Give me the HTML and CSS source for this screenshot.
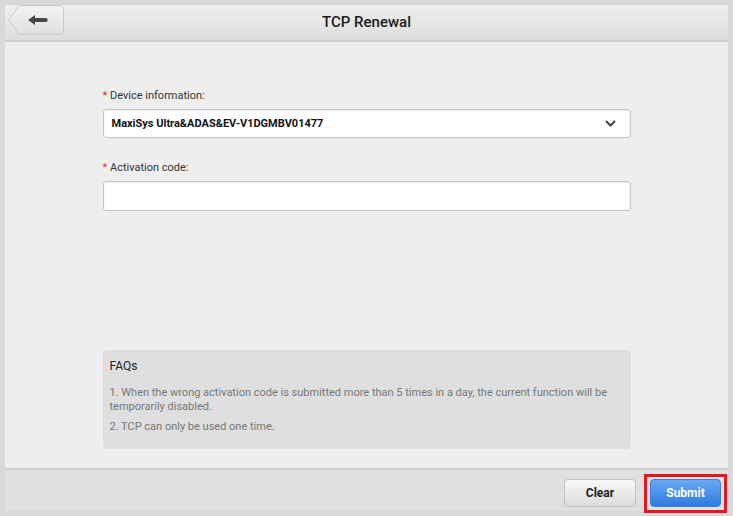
FILE: index.html
```html
<!DOCTYPE html>
<html>
<head>
    <title>TCP Renewal</title>
    <link rel="stylesheet" href="styles.css">
</head>
<body>
    <div class="app">
        <div class="header">
            <button class="back-btn">
                <svg class="back-shape" width="56" height="30" viewBox="0 0 56 30">
                    <defs>
                        <linearGradient id="backGrad" x1="0" y1="0" x2="0" y2="1">
                            <stop offset="0" stop-color="#f3f3f3"/>
                            <stop offset="1" stop-color="#e0e0e0"/>
                        </linearGradient>
                    </defs>
                    <path d="M11 0.5 H51 Q55.5 0.5 55.5 5 V24.5 Q55.5 29 51 29 H11 L0.8 14.8 Z" fill="url(#backGrad)" stroke="#c9c9c9"/>
                    <path d="M20 15 L27 10 L27 13 L38 13 Q39.5 13 39.5 14.5 L39.5 15.5 Q39.5 17 38 17 L27 17 L27 20 Z" fill="#474747"/>
                </svg>
            </button>
            <h1 class="title">TCP Renewal</h1>
        </div>

        <div class="content">
            <div class="form">
                <label class="field-label"><span class="req">*</span> Device information:</label>
                <div class="select-box">
                    <span class="select-value">MaxiSys Ultra&amp;ADAS&amp;EV-V1DGMBV01477</span>
                    <svg class="chevron" width="11" height="7" viewBox="0 0 11 7">
                        <path d="M1 1 L5.5 5.5 L10 1" fill="none" stroke="#444" stroke-width="2"/>
                    </svg>
                </div>

                <label class="field-label second"><span class="req">*</span> Activation code:</label>
                <input class="text-input" type="text">

                <div class="faq">
                    <div class="faq-title">FAQs</div>
                    <p>1. When the wrong activation code is submitted more than 5 times in a day, the current function will be temporarily disabled.</p>
                    <p>2. TCP can only be used one time.</p>
                </div>
            </div>
        </div>

        <div class="footer">
            <button class="btn btn-clear">Clear</button>
            <div class="highlight">
                <button class="btn btn-submit">Submit</button>
            </div>
        </div>
    </div>
</body>
</html>
```

FILE: styles.css
```css
body {
    margin: 0;
    padding: 5px;
    background-color: #d9d9d9;
    font-family: Roboto, 'Liberation Sans', sans-serif;
    color: #222;
}
.app {
    height: 506px;
    display: flex;
    flex-direction: column;
    background-color: #eeeeee;
}
.header {
    position: relative;
    height: 35px;
    display: flex;
    align-items: center;
    justify-content: center;
    background: linear-gradient(#efefef, #dedede);
    border-bottom: 2px solid #cfcfcf;
}
.back-btn {
    position: absolute;
    left: 3px;
    top: 0;
    width: 56px;
    height: 30px;
    padding: 0;
    border: none;
    background: none;
    cursor: pointer;
}
.back-shape {
    display: block;
}
.title {
    margin: 0 0 2px;
    font-size: 15px;
    font-weight: 500;
    color: #1a1a1a;
}
.content {
    flex: 1;
    padding-top: 47px;
}
.form {
    width: 528px;
    margin: 0 auto;
}
.field-label {
    display: block;
    font-size: 11px;
    line-height: 13px;
    color: #333;
    margin-bottom: 7px;
}
.field-label.second {
    margin-top: 23px;
}
.req {
    color: #e03030;
}
.select-box {
    height: 29px;
    box-sizing: border-box;
    border: 1px solid #c4c4c4;
    border-radius: 3px;
    background-color: #fff;
    box-shadow: inset 0 1px 2px rgba(0, 0, 0, 0.08);
    display: flex;
    align-items: center;
    justify-content: space-between;
    padding: 0 14px 0 8px;
}
.select-value {
    font-size: 11px;
    font-weight: bold;
    color: #111;
}
.text-input {
    display: block;
    width: 100%;
    height: 30px;
    box-sizing: border-box;
    border: 1px solid #c4c4c4;
    border-radius: 3px;
    background-color: #fff;
    box-shadow: inset 0 1px 2px rgba(0, 0, 0, 0.08);
}
.faq {
    margin-top: 139px;
    background-color: #dfdfdf;
    border-radius: 4px;
    padding: 9px 7px 9px;
}
.faq-title {
    font-size: 12px;
    color: #222;
    margin-bottom: 13px;
}
.faq p {
    margin: 0 0 6px;
    font-size: 11px;
    line-height: 14px;
    color: #777;
}
.footer {
    height: 43px;
    box-sizing: border-box;
    border-top: 2px solid #cfcfcf;
    background-color: #e0e0e0;
    display: flex;
    align-items: flex-start;
    justify-content: flex-end;
    padding: 4px 1px 0 0;
    gap: 8px;
}
.highlight {
    border: 3px solid #e8141e;
    padding: 2px 3px 3px;
    display: flex;
}
.btn {
    width: 72px;
    height: 28px;
    border-radius: 4px;
    font-family: Roboto, 'Liberation Sans', sans-serif;
    font-size: 12px;
    font-weight: bold;
    cursor: pointer;
}
.btn-clear {
    margin-top: 5px;
    border: 1px solid #c2c2c2;
    background: linear-gradient(#f8f8f8, #dcdcdc);
    color: #222;
}
.btn-submit {
    width: 71px;
    border: 1px solid #3a7fd8;
    background: linear-gradient(#69a8f2, #2f7be0);
    color: #fff;
}
```
